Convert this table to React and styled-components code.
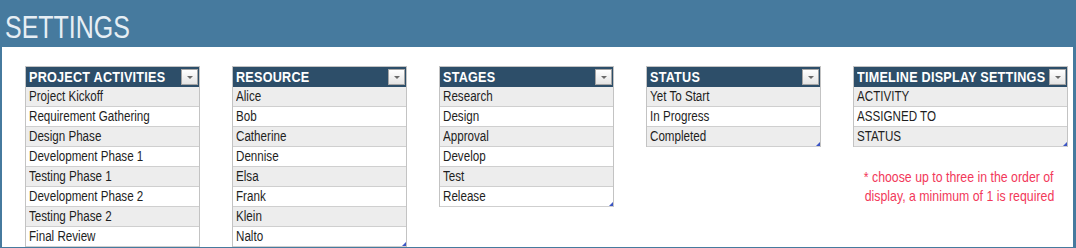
import React from 'react'
import styled, { createGlobalStyle } from 'styled-components'

const GlobalStyle = createGlobalStyle`
    html, body {
        margin: 0;
        padding: 0;
        background: #467a9e;
    }
    body {
        font-family: "Liberation Sans Narrow", "Arial Narrow", "Liberation Sans", sans-serif;
    }
`

// no narrow face installed, so squeeze the regular one
const Narrow = styled.span`
    display: inline-block;
    white-space: nowrap;
    transform: scaleX(${props => props.scale || 0.83});
    transform-origin: ${props => props.origin || 'left'} center;
`

const Page = styled.div`
    width: 1076px;
    height: 248px;
    background: #467a9e;
    padding: 0 3px 1px 2px;
    box-sizing: border-box;
    display: flex;
    flex-direction: column;
`

const TitleBar = styled.div`
    height: 47px;
    display: flex;
    align-items: center;
    padding-left: 3px;
`

const Title = styled.h1`
    margin: 0;
    font-size: 32px;
    font-weight: 400;
    color: #e6eef4;
    line-height: 1;
    padding-top: 6px;
`

const Panel = styled.div`
    flex: 1;
    background: #fff;
    padding: 19px 0 0 23px;
    display: grid;
    grid-template-columns: 175px 175px 175px 175px 215px;
    column-gap: 32px;
    align-items: start;
    overflow: hidden;
`

const Column = styled.div`
    display: flex;
    flex-direction: column;
`

const Table = styled.div`
    position: relative;
    border: 1px solid #c3c3c3;
    border-bottom: none;
`

const Header = styled.div`
    height: 20px;
    background: #2d4e69;
    display: flex;
    align-items: center;
    justify-content: space-between;
    padding: 0 1px 0 3px;
    overflow: hidden;
`

const HeaderText = styled.div`
    flex: 1;
    min-width: 0;
    color: #fff;
    font-weight: 700;
    font-size: 15px;
    letter-spacing: 0.3px;
    line-height: 20px;
`

const DropButton = styled.span`
    width: 15px;
    height: 14px;
    border: 1px solid #a5a5a5;
    background: linear-gradient(#ffffff, #e4e4e4);
    display: flex;
    align-items: center;
    justify-content: center;
    flex-shrink: 0;

    &::after {
        content: "";
        border-left: 3px solid transparent;
        border-right: 3px solid transparent;
        border-top: 3px solid #6a6a6a;
    }
`

const Row = styled.div`
    height: 19px;
    border-bottom: 1px solid #cfcfcf;
    background: ${props => props.shade ? '#ededed' : '#ffffff'};
    color: #1e1e1e;
    font-size: 14px;
    line-height: 19px;
    padding-left: 3px;
    white-space: nowrap;
`

const Handle = styled.span`
    position: absolute;
    right: 0;
    bottom: 1px;
    width: 0;
    height: 0;
    border-left: 4px solid transparent;
    border-bottom: 4px solid #3b55c4;
`

const Note = styled.div`
    margin-top: 21px;
    margin-right: 3px;
    display: flex;
    flex-direction: column;
    align-items: center;
    color: #f2385a;
    font-size: 14.5px;
    line-height: 19px;
`

const NoteLine = styled.div`
    white-space: nowrap;
`

const tables = [
    { title: 'PROJECT ACTIVITIES', rows: ['Project Kickoff', 'Requirement Gathering', 'Design Phase', 'Development Phase 1', 'Testing Phase 1', 'Development Phase 2', 'Testing Phase 2', 'Final Review'], handle: false },
    { title: 'RESOURCE', rows: ['Alice', 'Bob', 'Catherine', 'Dennise', 'Elsa', 'Frank', 'Klein', 'Nalto'], handle: true },
    { title: 'STAGES', rows: ['Research', 'Design', 'Approval', 'Develop', 'Test', 'Release'], handle: true },
    { title: 'STATUS', rows: ['Yet To Start', 'In Progress', 'Completed'], handle: true },
    { title: 'TIMELINE DISPLAY SETTINGS', rows: ['ACTIVITY', 'ASSIGNED TO', 'STATUS'], handle: true },
]

const App = () => {
    return (
        <Page>
            <GlobalStyle />
            <TitleBar>
                <Title><Narrow scale={0.78}>SETTINGS</Narrow></Title>
            </TitleBar>
            <Panel>
                {tables.map((t, i) => (
                    <Column key={t.title}>
                        <Table>
                            <Header>
                                <HeaderText><Narrow scale={0.84}>{t.title}</Narrow></HeaderText>
                                <DropButton />
                            </Header>
                            {t.rows.map((r, j) => (
                                <Row key={r} shade={j % 2 === 0}><Narrow>{r}</Narrow></Row>
                            ))}
                            {t.handle && <Handle />}
                        </Table>
                        {i === 4 && (
                            <Note>
                                <NoteLine><Narrow origin="center" scale={0.85}>* choose up to three in the order of</Narrow></NoteLine>
                                <NoteLine><Narrow origin="center" scale={0.85}>display, a minimum of 1 is required</Narrow></NoteLine>
                            </Note>
                        )}
                    </Column>
                ))}
            </Panel>
        </Page>
    )
}

export default App
